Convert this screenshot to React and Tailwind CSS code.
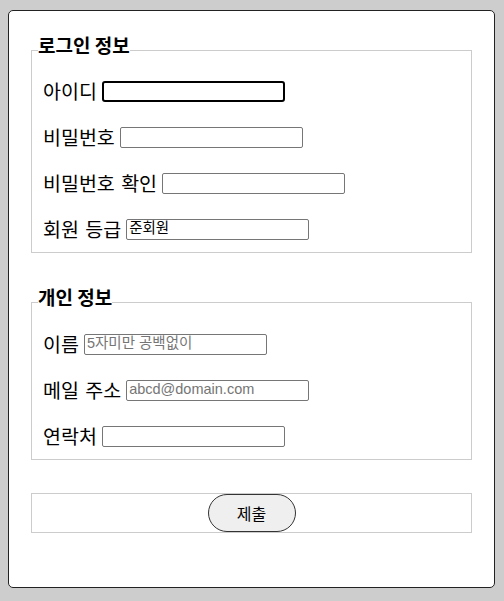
import React from 'react';

const label = "text-[19.5px] leading-[26px] text-black whitespace-nowrap [word-spacing:2px]";
const input =
  "h-[21px] w-[183px] rounded-[2px] border border-[#767676] bg-white px-[2px] text-[14.5px] text-black outline-none placeholder:text-[#757575] font-['Liberation_Sans','Noto_Sans_CJK_KR',sans-serif]";

const Row = ({ title, children }) => (
  <div className="flex h-[26px] items-center gap-[5px]">
    <span className={label}>{title}</span>
    {children}
  </div>
);

const Group = ({ title, className, children }) => (
  <fieldset className={"m-0 border border-[#cccccc] px-[11px] " + className}>
    <legend className="-ml-[5px] px-0 pb-[10px] text-[19px] font-bold leading-[22px] text-black">
      {title}
    </legend>
    <div className="flex flex-col gap-[20px]">{children}</div>
  </fieldset>
);

export default function App() {
  return (
    <div className="min-h-[601px] bg-[#cdcdcd] pl-[8px] pt-[10px] font-['Noto_Sans_CJK_KR','Noto_Sans',sans-serif]">
      <div className="w-[487px] rounded-[5px] border border-[#222] bg-white px-[22px] pb-[54px] pt-[23px]">
        <Group title="로그인 정보" className="pt-[12px] pb-[10px]">
          <Row title="아이디">
            <input className={input + " border-2 border-black rounded-[3px]"} />
          </Row>
          <Row title="비밀번호">
            <input type="password" className={input} />
          </Row>
          <Row title="비밀번호 확인">
            <input type="password" className={input} />
          </Row>
          <Row title="회원 등급">
            <input className={input} defaultValue="준회원" readOnly />
          </Row>
        </Group>

        <div className="h-[33px]" />

        <Group title="개인 정보" className="pt-[13px] pb-[10px]">
          <Row title="이름">
            <input className={input} placeholder="5자미만 공백없이" />
          </Row>
          <Row title="메일 주소">
            <input className={input} placeholder="abcd@domain.com" />
          </Row>
          <Row title="연락처">
            <input className={input} />
          </Row>
        </Group>

        <fieldset className="m-0 mt-[33px] flex justify-center border border-[#cccccc] p-0">
          <div className="flex justify-center">
            <button
              type="button"
              className="h-[38px] w-[88px] rounded-full border border-[#333] bg-[#efefef] text-[16px] text-black"
            >
              제출
            </button>
          </div>
        </fieldset>
      </div>
    </div>
  );
}
